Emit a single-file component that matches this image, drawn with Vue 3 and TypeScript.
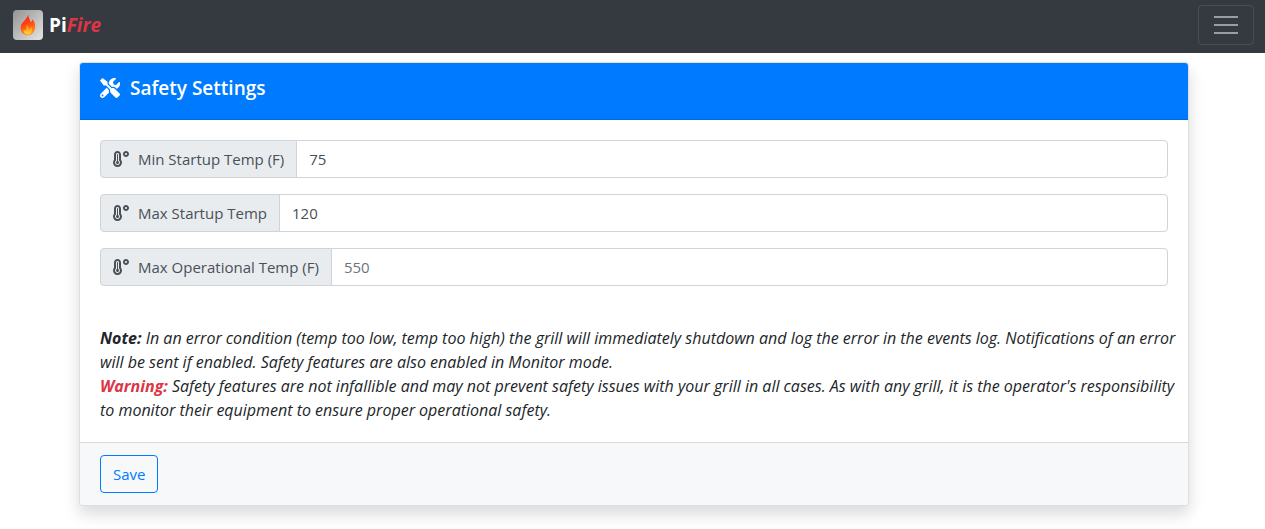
<script setup lang="ts">
import { reactive, ref } from 'vue'

interface TempField {
  id: string
  label: string
  value: string
  placeholder: string
}

const fields = reactive<TempField[]>([
  { id: 'minstartuptemp', label: 'Min Startup Temp (F)', value: '75', placeholder: '' },
  { id: 'maxstartuptemp', label: 'Max Startup Temp', value: '120', placeholder: '' },
  { id: 'maxtemp', label: 'Max Operational Temp (F)', value: '', placeholder: '550' },
])

const menuOpen = ref(false)
</script>

<template>
  <nav class="navbar">
    <a class="brand" href="#">
      <svg class="logo" viewBox="0 0 30 30" aria-hidden="true">
        <defs>
          <linearGradient id="tile" x1="0" y1="0" x2="1" y2="1">
            <stop offset="0" stop-color="#929292" />
            <stop offset="1" stop-color="#e6e6e6" />
          </linearGradient>
          <linearGradient id="flame" x1="0" y1="0" x2="0.3" y2="1">
            <stop offset="0" stop-color="#ff2020" />
            <stop offset="0.5" stop-color="#ff4010" />
            <stop offset="1" stop-color="#ff9020" />
          </linearGradient>
          <linearGradient id="core" x1="0" y1="0" x2="0" y2="1">
            <stop offset="0" stop-color="#ff7a10" />
            <stop offset="0.6" stop-color="#ffb01c" />
            <stop offset="1" stop-color="#ffd84a" />
          </linearGradient>
        </defs>
        <rect width="30" height="30" rx="4" fill="url(#tile)" />
        <path fill="url(#flame)" d="M15.5 4.500c-.5 3 1.500 4.500 2 7.500 1.200-.2 1.800-1.200 1.800-2.700 1.800 1.800 2.900 4.200 2.900 7.200 0 5-3 8.700-7.400 8.700-4.300 0-7.200-3.200-7.200-7.300 0-5.500 5.400-7.400 7.900-13.400z" />
        <path fill="url(#core)" d="M14.500 14c-.2 2.500 1.500 3.200 1.900 5 1.400-.6 1.800-1.700 2-3 1.800 4.500.2 8.400-3.600 8.400-3.300 0-4.800-2.400-4-5.100.5.8 1.200 1.100 1.800.9 1.300-.5-.1-3.200 1.900-6.200z" />
      </svg>
      <strong>Pi<em>Fire</em></strong>
    </a>
    <button class="toggler" type="button" aria-label="Toggle navigation" :aria-expanded="menuOpen" @click="menuOpen = !menuOpen">
      <svg viewBox="0 0 30 30" aria-hidden="true">
        <path stroke="rgba(255,255,255,.5)" stroke-linecap="square" stroke-width="2" d="M4 7h22M4 15h22M4 23h22" />
      </svg>
    </button>
  </nav>

  <main class="container">
    <form class="card" @submit.prevent>
      <header class="card-header">
        <h1>
          <svg viewBox="0 0 512 512" aria-hidden="true">
            <path fill="currentColor" d="M501.1 395.7L384 278.6c-23.1-23.1-57.6-27.6-85.4-13.9L192 158.1V96L64 0 0 64l96 128h62.1l106.6 106.6c-13.6 27.8-9.2 62.3 13.9 85.4l117.1 117.1c14.6 14.6 38.2 14.6 52.7 0l52.7-52.7c14.5-14.6 14.5-38.2 0-52.7zM331.7 225c28.3 0 54.9 11 74.9 31l19.4 19.4c15.8-6.9 30.8-16.5 43.8-29.5 37.1-37.1 49.7-89.3 37.9-136.7-2.2-9-13.5-12.1-20.1-5.5l-74.4 74.4-67.9-11.3L334 98.9l74.4-74.4c6.6-6.6 3.4-17.9-5.7-20.2-47.4-11.7-99.6.9-136.6 37.9-28.5 28.5-41.9 66.1-41.2 103.6l82.1 82.1c8.1-1.9 16.5-2.9 24.7-2.9zm-103.9 82l-56.7-56.7L18.7 402.8c-25 25-25 65.5 0 90.5s65.5 25 90.5 0l123.6-123.6c-7.6-19.9-9.9-41.6-5-62.7zM64 472c-13.2 0-24-10.8-24-24 0-13.3 10.7-24 24-24s24 10.7 24 24c0 13.2-10.7 24-24 24z" />
          </svg>
          Safety Settings
        </h1>
      </header>

      <div class="card-body">
        <div v-for="field in fields" :key="field.id" class="input-group">
          <label :for="field.id">
            <svg viewBox="0 0 512 512" aria-hidden="true">
              <path fill="currentColor" d="M416 0c-52.9 0-96 43.1-96 96s43.1 96 96 96 96-43.1 96-96-43.1-96-96-96zm0 128c-17.7 0-32-14.3-32-32s14.3-32 32-32 32 14.3 32 32-14.3 32-32 32zm-160-16C256 50.1 205.9 0 144 0S32 50.1 32 112v166.5C12.3 303.2 0 334 0 368c0 79.5 64.5 144 144 144s144-64.5 144-144c0-34-12.3-64.9-32-89.5V112zM144 448c-44.1 0-80-35.9-80-80 0-25.5 12.2-48.9 32-63.8V112c0-26.5 21.5-48 48-48s48 21.5 48 48v192.2c19.8 14.8 32 38.3 32 63.8 0 44.1-35.9 80-80 80zm16-125.1V112c0-8.8-7.2-16-16-16s-16 7.2-16 16v210.9c-18.6 6.6-32 24.2-32 45.1 0 26.5 21.5 48 48 48s48-21.5 48-48c0-20.9-13.4-38.5-32-45.1z" />
            </svg>
            {{ field.label }}
          </label>
          <input :id="field.id" v-model="field.value" type="text" inputmode="numeric" :placeholder="field.placeholder" />
        </div>

        <div class="notes">
          <p>
            <strong>Note:</strong>
            In an error condition (temp too low, temp too high) the grill will immediately shutdown and log the error in the events log. Notifications of an error will be sent if enabled. Safety features are also enabled in Monitor mode.
          </p>
          <p>
            <strong class="danger">Warning:</strong>
            Safety features are not infallible and may not prevent safety issues with your grill in all cases. As with any grill, it is the operator's responsibility to monitor their equipment to ensure proper operational safety.
          </p>
        </div>
      </div>

      <footer class="card-footer">
        <button class="save" type="submit">Save</button>
      </footer>
    </form>
  </main>
</template>

<style>
body {
  margin: 0;
  background: #fff;
}
</style>

<style scoped>
.navbar,
.container {
  font-family: "Segoe UI", "Open Sans", "Noto Sans", sans-serif;
  font-size: 15px;
  line-height: 24px;
  color: #212529;
}

.navbar,
.container,
.navbar *,
.container * {
  box-sizing: border-box;
}

.navbar {
  display: flex;
  align-items: center;
  justify-content: space-between;
  height: 53px;
  padding: 0 11px 3px 13px;
  background: #343a40;
}

.brand {
  display: flex;
  align-items: center;
  gap: 6px;
  color: #fff;
  font-size: 19px;
  text-decoration: none;
}

.brand em {
  color: #dc3545;
}

.logo {
  width: 30px;
  height: 30px;
}

.toggler {
  display: flex;
  align-items: center;
  justify-content: center;
  width: 56px;
  height: 40px;
  padding: 0;
  background: transparent;
  border: 1px solid rgba(255, 255, 255, 0.1);
  border-radius: 4px;
}

.toggler svg {
  width: 30px;
  height: 30px;
}

.container {
  padding: 9px 76px 24px 79px;
}

.card {
  background: #fff;
  border: 1px solid rgba(0, 0, 0, 0.125);
  border-radius: 4px;
  box-shadow: 0 8px 16px rgba(0, 0, 0, 0.15);
}

.card-header {
  padding: 13px 20px 19px;
  color: #fff;
  background: #007bff;
  border-bottom: 1px solid rgba(0, 0, 0, 0.125);
  border-radius: 3px 3px 0 0;
}

.card-header h1 {
  display: flex;
  align-items: center;
  gap: 10px;
  margin: 0;
  font-size: 19px;
  font-weight: 600;
  line-height: 24px;
}

.card-header svg {
  width: 20px;
  height: 20px;
}

.card-body {
  padding: 20px;
}

.input-group {
  display: flex;
  height: 38px;
  margin-bottom: 16px;
}

.input-group label {
  display: flex;
  align-items: center;
  gap: 9px;
  padding: 0 12px;
  color: #495057;
  white-space: nowrap;
  background: #e9ecef;
  border: 1px solid #ced4da;
  border-radius: 4px 0 0 4px;
}

.input-group svg {
  width: 16px;
  height: 16px;
}

.input-group input {
  flex: 1;
  min-width: 0;
  margin: 0 0 0 -1px;
  padding: 6px 12px;
  color: #495057;
  font: inherit;
  background: #fff;
  border: 1px solid #ced4da;
  border-radius: 0 4px 4px 0;
}

.input-group input::placeholder {
  color: #6c757d;
  opacity: 1;
}

.notes {
  margin: 40px -8px 0 0;
  font-size: 16px;
  font-style: italic;
}

.notes p {
  margin: 0;
}

.danger {
  color: #dc3545;
}

.card-footer {
  padding: 12px 20px;
  background: #f7f8fa;
  border-top: 1px solid rgba(0, 0, 0, 0.125);
  border-radius: 0 0 3px 3px;
}

.save {
  display: block;
  height: 38px;
  padding: 0 12px;
  color: #007bff;
  font: inherit;
  background: transparent;
  border: 1px solid #007bff;
  border-radius: 4px;
}
</style>
